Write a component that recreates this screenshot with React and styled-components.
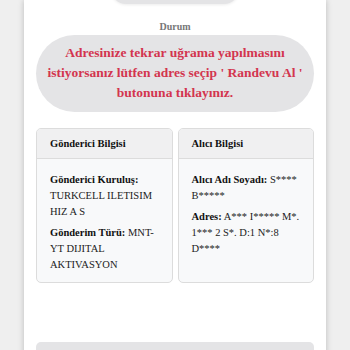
import React from 'react'
import styled, { createGlobalStyle } from 'styled-components'

const GlobalStyle = createGlobalStyle`
  html, body {
    margin: 0;
    padding: 0;
    background: #efefef;
    font-family: "Liberation Serif", "Times New Roman", serif;
  }
`

const Page = styled.div`
  width: 302px;
  margin: 0 auto;
  min-height: 350px;
  background: #ffffff;
  box-shadow: 0 0 6px rgba(0, 0, 0, 0.22);
  padding: 0 12px;
  box-sizing: border-box;
  overflow: hidden;
  display: flex;
  flex-direction: column;
`

const TopPill = styled.div`
  align-self: center;
  width: 128px;
  height: 30px;
  margin-top: -26px;
  border-radius: 15px;
  background: #e4e4e6;
  box-shadow: 0 1px 3px rgba(0, 0, 0, 0.08);
`

const Label = styled.div`
  margin-top: 17px;
  text-align: center;
  font-size: 10px;
  line-height: 12px;
  font-weight: bold;
  color: #777777;
`

const StatusPill = styled.div`
  margin-top: 2px;
  background: #e4e4e6;
  border-radius: 40px;
  padding: 8px 8px 9px;
  text-align: center;
  color: #d3354f;
  font-weight: bold;
  font-size: 13.5px;
  line-height: 20px;
`

const Cards = styled.div`
  margin-top: 16px;
  display: grid;
  grid-template-columns: 1fr 1fr;
  gap: 5px;
`

const Card = styled.div`
  height: 155px;
  box-sizing: border-box;
  background: #f8f9fa;
  border: 1px solid #dcdcdc;
  border-radius: 5px;
  overflow: hidden;
`

const CardHeader = styled.div`
  height: 30px;
  box-sizing: border-box;
  padding: 0 13px;
  display: flex;
  align-items: center;
  background: #f0f0f1;
  border-bottom: 1px solid #dcdcdc;
  font-size: 10.5px;
  font-weight: bold;
  color: #111;
`

const CardBody = styled.div`
  padding: 13px 12px 0 13px;
  display: flex;
  flex-direction: column;
  gap: 5px;
`

const Field = styled.div`
  font-size: 10.5px;
  line-height: 16px;
  color: #222;

  b {
    color: #111;
  }
`

const BottomBar = styled.div`
  margin-top: 59px;
  height: 20px;
  border-radius: 5px 5px 0 0;
  background: #e4e4e6;
`

const InfoCard = ({ title, fields }) => (
  <Card>
    <CardHeader>{title}</CardHeader>
    <CardBody>
      {fields.map((f) => (
        <Field key={f.label}>
          <b>{f.label}</b> {f.value}
        </Field>
      ))}
    </CardBody>
  </Card>
)

const App = () => {
  return (
    <>
      <GlobalStyle />
      <Page>
        <TopPill />
        <Label>Durum</Label>
        <StatusPill>
          Adresinize tekrar uğrama yapılmasını istiyorsanız lütfen adres seçip ' Randevu Al ' butonuna tıklayınız.
        </StatusPill>
        <Cards>
          <InfoCard
            title="Gönderici Bilgisi"
            fields={[
              { label: 'Gönderici Kuruluş:', value: 'TURKCELL ILETISIM HIZ A S' },
              { label: 'Gönderim Türü:', value: 'MNT-YT DIJITAL AKTIVASYON' },
            ]}
          />
          <InfoCard
            title="Alıcı Bilgisi"
            fields={[
              { label: 'Alıcı Adı Soyadı:', value: 'S**** B*****' },
              { label: 'Adres:', value: 'A*** I***** M*. 1*** 2 S*. D:1 N*:8 D****' },
            ]}
          />
        </Cards>
        <BottomBar />
      </Page>
    </>
  )
}

export default App
